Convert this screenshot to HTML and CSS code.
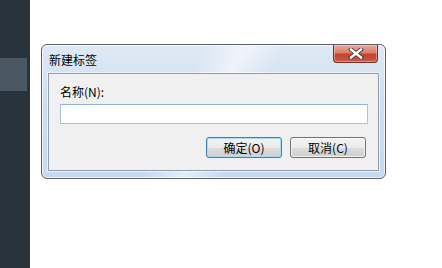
FILE: index.html
```html
<!DOCTYPE html>
<html lang="zh-CN">
<head>
    <meta charset="UTF-8">
    <title>新建标签</title>
    <link rel="stylesheet" href="styles.css">
</head>
<body>
    <div class="page">
        <div class="sidebar">
            <div class="sidebar-item"></div>
        </div>
        <div class="main">
            <div class="dialog">
                <div class="title-bar">
                    <span class="title">新建标签</span>
                    <button class="close-button">
                        <svg width="16" height="11" viewBox="0 0 16 11">
                            <path d="M3 1.5 L13 9.5 M13 1.5 L3 9.5" stroke="#4a3a38" stroke-width="4.2" stroke-linecap="square"/>
                            <path d="M3 1.5 L13 9.5 M13 1.5 L3 9.5" stroke="#fff" stroke-width="2.4" stroke-linecap="square"/>
                        </svg>
                    </button>
                </div>
                <div class="panel">
                    <label class="field-label" for="tag-name">名称(N):</label>
                    <input type="text" id="tag-name" class="name-input">
                    <div class="buttons">
                        <button class="btn btn-default">确定(O)</button>
                        <button class="btn">取消(C)</button>
                    </div>
                </div>
            </div>
        </div>
    </div>
</body>
</html>
```

FILE: styles.css
```css
body {
    margin: 0;
    font-family: "Noto Sans CJK SC", "Liberation Sans", sans-serif;
    font-size: 12px;
    background-color: #fff;
}

.page {
    display: flex;
    height: 268px;
}

.sidebar {
    width: 30px;
    background-color: #29333c;
    padding-top: 58px;
    box-sizing: border-box;
}

.sidebar-item {
    width: 27px;
    height: 33px;
    background-color: #4a5863;
}

.main {
    flex: 1;
    padding: 44px 0 0 11px;
}

/* Win7 style dialog frame */
.dialog {
    width: 345px;
    height: 135px;
    box-sizing: border-box;
    border: 1px solid #5b6068;
    border-radius: 6px;
    background:
        linear-gradient(115deg, transparent 40%, rgba(255, 255, 255, 0.55) 50%, transparent 60%),
        linear-gradient(to bottom, #dfe9f5 0%, #cfdff0 40%, #c6d9ee 100%);
    box-shadow: inset 0 0 0 1px rgba(255, 255, 255, 0.7);
    display: flex;
    flex-direction: column;
}

.title-bar {
    display: flex;
    justify-content: space-between;
    height: 28px;
}

.title {
    padding: 7px 0 0 7px;
    line-height: 16px;
    color: #000;
}

.close-button {
    width: 45px;
    height: 18px;
    margin-right: 7px;
    padding: 0;
    border: 1px solid #6b3028;
    border-top: none;
    border-radius: 0 0 4px 4px;
    background: linear-gradient(to bottom, #e9a99b 0%, #d9806e 45%, #c4442f 55%, #c75a45 100%);
    box-shadow: inset 0 0 0 1px rgba(255, 220, 210, 0.45);
    display: flex;
    align-items: center;
    justify-content: center;
}

.panel {
    margin: 0 6px 7px 6px;
    flex: 1;
    border: 1px solid #8f9eae;
    background-color: #f0f0f0;
    box-shadow: 0 0 0 1px rgba(255, 255, 255, 0.6);
    padding: 10px 12px 0 11px;
    display: flex;
    flex-direction: column;
}

.field-label {
    line-height: 16px;
    color: #000;
}

.name-input {
    margin-top: 4px;
    height: 20px;
    width: 308px;
    box-sizing: border-box;
    border: 1px solid #a3c4e4;
    border-top-color: #8fb3d8;
    background-color: #fff;
    outline: none;
}

.buttons {
    display: flex;
    justify-content: flex-end;
    gap: 8px;
    margin-top: 13px;
}

.btn {
    width: 76px;
    height: 21px;
    padding: 0;
    border: 1px solid #707070;
    border-radius: 3px;
    background: linear-gradient(to bottom, #f2f2f2 0%, #ebebeb 50%, #dddddd 51%, #cfcfcf 100%);
    box-shadow: inset 0 0 0 1px rgba(255, 255, 255, 0.7);
    font-family: inherit;
    font-size: 12px;
    color: #000;
}

.btn-default {
    border-color: #3c7fb1;
    box-shadow: inset 0 0 0 1px #a8dcf5;
}
```
